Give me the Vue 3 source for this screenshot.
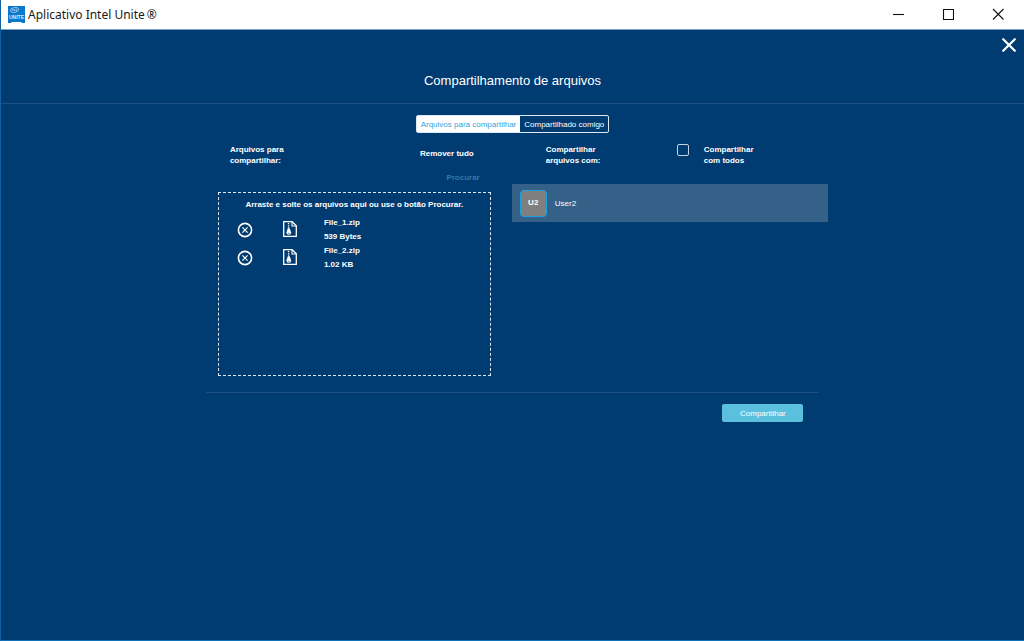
<script setup>
import { ref } from 'vue'

const tab = ref('share')
const shareAll = ref(false)
const files = ref([
  { name: 'File_1.zip', size: '539 Bytes' },
  { name: 'File_2.zip', size: '1.02 KB' },
])
const users = [{ initials: 'U2', name: 'User2' }]

function removeFile(index) {
  files.value.splice(index, 1)
}
</script>

<template>
  <div class="window">
    <header class="titlebar">
      <svg class="logo" viewBox="0 0 17 17" aria-hidden="true">
        <path d="M0 0H17V17H14L13 16H4L3 17H0Z" fill="#0c78cc" />
        <ellipse cx="6.5" cy="4" rx="4.2" ry="2.4" fill="none" stroke="#9fd0f2" stroke-width=".8" transform="rotate(-12 6.5 4)" />
        <path d="M4.5 3.2V5M5.8 5V3.6H7V5M8.4 2.6V5" fill="none" stroke="#d5ebfa" stroke-width=".6" />
        <text x="8.5" y="13" text-anchor="middle" font-size="5" font-weight="700" fill="#d5ebfa">UNITE</text>
      </svg>
      <span class="app-name">Aplicativo Intel Unite<span class="mark">®</span></span>
      <div class="controls">
        <button type="button" aria-label="Minimizar">
          <svg viewBox="0 0 12 12"><path d="M1 6.5H12" /></svg>
        </button>
        <button type="button" aria-label="Maximizar">
          <svg viewBox="0 0 12 12"><path d="M1.5 1.5H11.5V11.5H1.5Z" /></svg>
        </button>
        <button type="button" aria-label="Fechar janela">
          <svg viewBox="0 0 12 12"><path d="M1 1L11.5 11.5M11.5 1L1 11.5" /></svg>
        </button>
      </div>
    </header>

    <main class="body">
      <div class="heading">
        <button class="close" type="button" aria-label="Fechar">
          <svg viewBox="0 0 14 14"><path d="M1.2 1.2L12.8 12.8M12.8 1.2L1.2 12.8" /></svg>
        </button>
        <h1>Compartilhamento de arquivos</h1>
      </div>

      <nav class="tabs">
        <button type="button" :class="{ active: tab === 'share' }" @click="tab = 'share'">Arquivos para compartilhar</button>
        <button type="button" :class="{ active: tab === 'shared' }" @click="tab = 'shared'">Compartilhado comigo</button>
      </nav>

      <div class="columns">
        <section class="files">
          <div class="files-head">
            <h2>Arquivos para<br />compartilhar:</h2>
            <button class="remove-all" type="button" @click="files = []">Remover tudo</button>
          </div>
          <div class="browse-row"><button class="browse" type="button">Procurar</button></div>
          <div class="dropzone">
            <p>Arraste e solte os arquivos aqui ou use o botão Procurar.</p>
            <ul>
              <li v-for="(file, i) in files" :key="file.name">
                <button type="button" class="remove" :aria-label="'Remover ' + file.name" @click="removeFile(i)">
                  <svg viewBox="0 0 16 16">
                    <circle cx="8" cy="8" r="6.6" stroke-width="1.6" />
                    <path d="M5.4 5.4L10.6 10.6M10.6 5.4L5.4 10.6" stroke-width="1.2" />
                  </svg>
                </button>
                <svg class="zip" viewBox="0 0 14 16" aria-hidden="true">
                  <path d="M.7.7H9.2L13.3 4.8V15.3H.7Z" stroke-width="1.3" />
                  <path d="M9 1V5H13" stroke-width="1.1" />
                  <path d="M5.6 2V3.2M5.6 4.2V5.4M5.6 6.2V7.4" stroke-width="1.4" />
                  <path d="M4.8 7.2H6.6L8.2 11.4Q8.2 13.8 5.8 13.8Q3.4 13.8 3.4 11.4Z" fill="#fff" stroke="none" />
                  <path d="M5.1 12.3H6.5" stroke="#003c71" stroke-width=".7" />
                </svg>
                <div class="meta"><span>{{ file.name }}</span><span>{{ file.size }}</span></div>
              </li>
            </ul>
          </div>
        </section>

        <section class="people">
          <div class="people-head">
            <h2>Compartilhar<br />arquivos com:</h2>
            <input id="share-all" v-model="shareAll" type="checkbox" />
            <label for="share-all">Compartilhar<br />com todos</label>
          </div>
          <ul>
            <li v-for="user in users" :key="user.name" class="user">
              <span class="avatar">{{ user.initials }}</span>
              <span>{{ user.name }}</span>
            </li>
          </ul>
        </section>
      </div>

      <footer class="actions">
        <button type="button">Compartilhar</button>
      </footer>
    </main>
  </div>
</template>

<style>
body {
  background: #003c71;
}
</style>

<style scoped>
.window {
  box-sizing: border-box;
  min-height: 100vh;
  display: flex;
  flex-direction: column;
  border-left: 1px solid #11629f;
  border-bottom: 1px solid #1170b8;
  background: #003c71;
  color: #fff;
  font: 8px/11px "Liberation Sans", Arial, sans-serif;
}
button {
  margin: 0;
  padding: 0;
  border: 0;
  background: none;
  color: inherit;
  font: inherit;
  cursor: pointer;
}
h1, h2, p, ul {
  margin: 0;
  padding: 0;
  font-size: inherit;
  list-style: none;
}
svg {
  display: block;
}
.titlebar {
  display: flex;
  align-items: center;
  height: 29px;
  padding-left: 7px;
  border-bottom: 1px solid #6fa3cc;
  background: #fff;
  color: #1a1a1a;
}
.logo {
  width: 17px;
  height: 17px;
}
.app-name {
  margin-left: 3px;
  font: 12px/16px "Noto Sans", "Open Sans", sans-serif;
}
.mark {
  margin-left: 2px;
}
.controls {
  display: flex;
  margin-left: auto;
  padding-right: 1px;
}
.controls button {
  width: 50px;
  height: 26px;
  margin-bottom: 2px;
  display: grid;
  place-items: center;
}
.controls svg {
  width: 12px;
  height: 12px;
  fill: none;
  stroke: #111;
  stroke-width: 1.1;
}
.heading {
  display: flex;
  flex-direction: column;
  padding: 8px 8px 14px;
  border-bottom: 1px solid #1d5081;
}
.close {
  align-self: flex-end;
  width: 14px;
  height: 14px;
}
.close svg {
  fill: none;
  stroke: #fff;
  stroke-width: 2.2;
  stroke-linecap: round;
}
h1 {
  margin-top: 21px;
  font-size: 13px;
  line-height: 16px;
  font-weight: 400;
  text-align: center;
}
.tabs {
  display: flex;
  width: fit-content;
  margin: 11px auto 0;
  border: 1px solid #dce8f2;
  border-radius: 2px;
}
.tabs button {
  height: 16px;
  padding: 0 4px;
}
.tabs .active {
  background: #fff;
  color: #35a3dc;
}
.columns {
  display: grid;
  grid-template-columns: 273fr 316fr;
  gap: 21px;
  width: 59.6%;
  margin: 11px 0 0 21.2%;
}
h2, label, .files {
  font-weight: 700;
}
.files-head {
  display: flex;
  align-items: flex-start;
  justify-content: space-between;
  padding: 0 17px 0 12px;
}
.remove-all {
  margin-top: 4px;
}
.browse-row {
  display: flex;
  justify-content: flex-end;
  padding: 6px 11px 9px 0;
}
.browse {
  color: #3278ae;
}
.dropzone {
  min-height: 170px;
  padding: 6px 0;
  border: 1px dashed #dce8f2;
}
.dropzone p {
  text-align: center;
}
.dropzone ul {
  padding: 6px 0 0 18px;
}
.dropzone li {
  display: flex;
  align-items: center;
  height: 28px;
}
.remove {
  width: 16px;
  height: 16px;
}
.remove svg, .zip {
  fill: none;
  stroke: #fff;
}
.zip {
  width: 14px;
  height: 16px;
  margin: 0 27px 2px 30px;
}
.meta {
  display: grid;
  line-height: 14px;
}
.people-head {
  display: flex;
  align-items: flex-start;
  padding-left: 34px;
}
.people-head h2 {
  width: 131px;
}
.people-head input {
  appearance: none;
  box-sizing: border-box;
  width: 12px;
  height: 12px;
  margin: 0 15px 0 0;
  border: 1px solid #c3d5e5;
  border-radius: 2px;
}
.people-head input:checked {
  background: #5bc0de;
}
.people ul {
  margin-top: 18px;
}
.user {
  display: flex;
  align-items: center;
  gap: 8px;
  height: 38px;
  padding-left: 8px;
  background: #356189;
}
.avatar {
  box-sizing: border-box;
  width: 27px;
  height: 27px;
  border: 1px solid #1da1dc;
  border-radius: 4px;
  background: #7f7f7f;
  font-weight: 700;
  line-height: 24px;
  text-align: center;
}
.actions {
  display: flex;
  justify-content: flex-end;
  width: 60%;
  box-sizing: border-box;
  margin: 16px auto 0;
  padding: 11px 16px 0;
  border-top: 1px solid #1d5081;
}
.actions button {
  width: 81px;
  height: 18px;
  border-radius: 2px;
  background: #5bc0de;
}
</style>
